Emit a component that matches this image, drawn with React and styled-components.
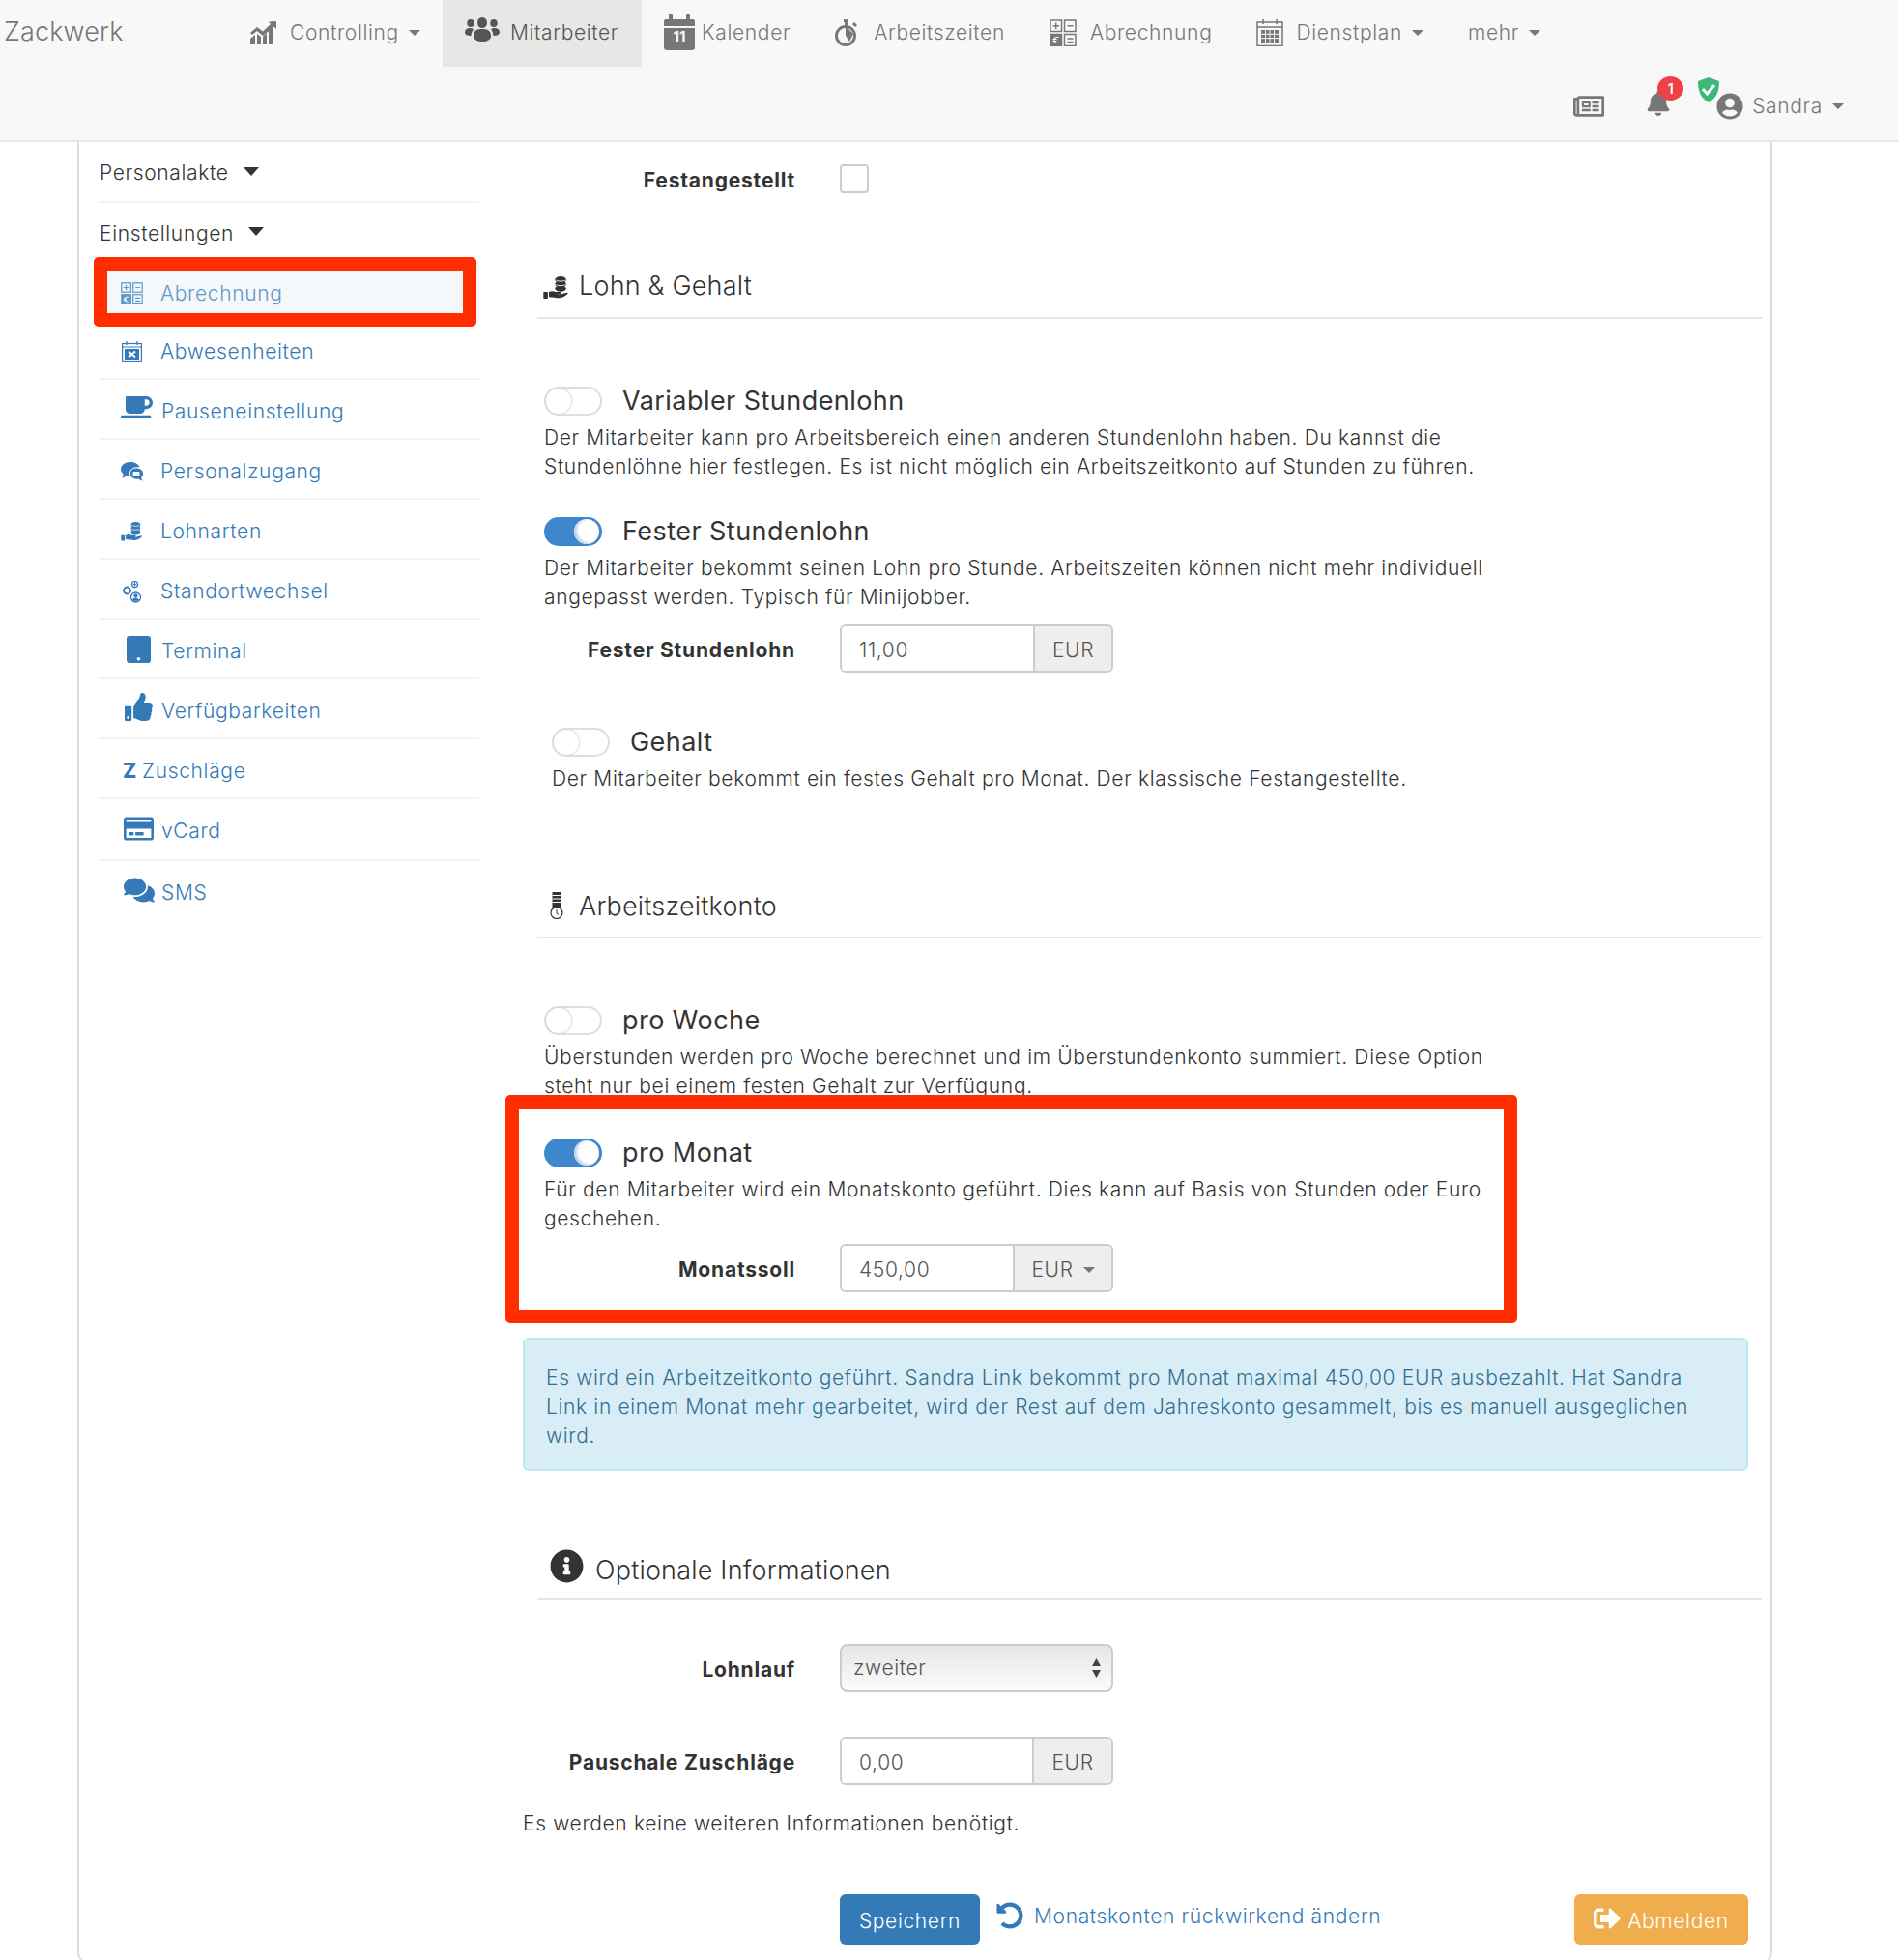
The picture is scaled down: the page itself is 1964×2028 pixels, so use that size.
import React from 'react';
import styled, { createGlobalStyle } from 'styled-components';
import {
  FaBell,
  FaCoffee,
  FaComments,
  FaInfoCircle,
  FaRegCreditCard,
  FaRegNewspaper,
  FaSignOutAlt,
  FaThumbsUp,
  FaUndoAlt,
  FaUserCircle,
} from 'react-icons/fa';

const GlobalStyle = createGlobalStyle`
  html, body {
    margin: 0;
    height: 2028px;
    overflow: hidden;
    background: #fff;
    font-family: Inter, "Liberation Sans", sans-serif;
    font-size: 21px;
    line-height: 30px;
    letter-spacing: 0.65px;
    color: #333;
  }
  * { box-sizing: border-box; }
`;

const Navbar = styled.header`
  height: 147px;
  background: #f8f8f8;
  border-bottom: 2px solid #e7e7e7;
`;

const TopRow = styled.div`
  display: flex;
  height: 69px;
`;

const Brand = styled.div`
  width: 236px;
  padding-left: 4px;
  font-size: 27px;
  font-weight: 300;
  line-height: 66px;
  letter-spacing: 0.15px;
  color: #777;
`;

const NavItem = styled.div`
  display: flex;
  align-items: center;
  height: 69px;
  padding: 0 ${(p) => (p.$active ? 24 : 23)}px 2px 23px;
  font-weight: 300;
  color: ${(p) => (p.$active ? '#555' : '#777')};
  background: ${(p) => (p.$active ? '#e7e7e7' : 'transparent')};
  white-space: nowrap;
`;

const NavIcon = styled.span`
  display: flex;
  flex: none;
  width: ${(p) => p.$width}px;
  margin-top: ${(p) => p.$lift || 0}px;
`;

const Caret = styled.i`
  display: inline-block;
  margin-left: 10px;
  border-top: 6px solid #777;
  border-left: 6px solid transparent;
  border-right: 6px solid transparent;
`;

const BottomRow = styled.div`
  display: flex;
  justify-content: flex-end;
  align-items: flex-start;
  height: 76px;
  padding-right: 56px;
`;

const NewsIcon = styled.span`
  display: flex;
  margin-top: 25px;
  margin-right: 43px;
  color: #777;
`;

const Bell = styled.span`
  position: relative;
  display: flex;
  margin-top: 25px;
  margin-right: 47px;
  color: #777;
`;

const Badge = styled.span`
  position: absolute;
  top: -15px;
  left: 12px;
  width: 27px;
  height: 25px;
  border-radius: 50%;
  background: #ee4045;
  color: #fff;
  font-size: 15px;
  font-weight: 600;
  line-height: 25px;
  letter-spacing: 0;
  text-align: center;
`;

const User = styled.div`
  position: relative;
  display: flex;
  align-items: center;
  margin-top: 23px;
  color: #777;
  font-weight: 300;
  line-height: 36px;
`;

const Shield = styled.svg`
  position: absolute;
  top: -12px;
  left: -20px;
`;

const UserName = styled.span`
  margin-left: 9px;
`;

const Panel = styled.div`
  display: flex;
  width: 1754px;
  height: 1884px;
  margin-left: 80px;
  border: 2px solid #ddd;
  border-top: 0;
  border-radius: 0 0 10px 10px;
`;

const Sidebar = styled.aside`
  flex: none;
  width: 414px;
  margin-right: 45px;
  padding-left: 21px;
`;

const SideHead = styled.div`
  display: flex;
  align-items: center;
  height: ${(p) => p.$height}px;
  padding-top: ${(p) => p.$top}px;
  font-weight: 300;
  color: #333;
  border-bottom: ${(p) => (p.$plain ? '0' : '2px solid #f3f3f3')};
`;

const SideCaret = styled.i`
  margin-left: 15px;
  margin-top: -4px;
  border-top: 9px solid #333;
  border-left: 8.5px solid transparent;
  border-right: 8.5px solid transparent;
`;

const rowTop = (p) => {
  if (p.$active) return 9;
  return p.$tall || p.$last ? 4 : 6;
};

const SideRow = styled.a`
  position: relative;
  display: flex;
  align-items: center;
  height: ${(p) => (p.$tall ? 64 : 62)}px;
  padding: ${rowTop}px 0 0 22px;
  font-weight: 300;
  color: ${(p) => (p.$active ? '#5f97c9' : '#337ab7')};
  background: ${(p) => (p.$active ? '#f5f8fb' : 'transparent')};
  border-bottom: ${(p) => (p.$last ? '0' : '2px solid #f3f3f3')};
`;

const SideIcon = styled.span`
  display: flex;
  flex: none;
  width: ${(p) => p.$width || 42}px;
  padding-left: ${(p) => p.$left || 0}px;
  margin-top: ${(p) => p.$lift || 0}px;
`;

const ZMark = styled.b`
  font-weight: 800;
`;

const RedFrame = styled.div`
  position: absolute;
  top: ${(p) => p.$top}px;
  left: ${(p) => p.$left}px;
  width: ${(p) => p.$width}px;
  height: ${(p) => p.$height}px;
  border: 14px solid #ff2d00;
  border-radius: 5px;
  pointer-events: none;
`;

const Main = styled.main`
  flex: none;
  width: 1282px;
`;

const FormRow = styled.div`
  display: flex;
  align-items: center;
  margin-top: ${(p) => p.$top}px;
`;

const Label = styled.label`
  width: 282px;
  margin-right: 46px;
  padding-top: 3px;
  text-align: right;
  font-weight: 700;
  line-height: 27px;
  letter-spacing: 0.8px;
`;

const Checkbox = styled.span`
  width: 30px;
  height: 30px;
  border: 2px solid #ccc;
  border-radius: 4px;
  background: #fff;
`;

const SectionHead = styled.h3`
  display: flex;
  align-items: flex-start;
  height: 54px;
  margin: ${(p) => p.$top}px 0 0 15px;
  padding: ${(p) => p.$textTop || 0}px 0 0 ${(p) => p.$pad}px;
  border-bottom: 2px solid #e5e5e5;
  font-size: 27px;
  font-weight: 300;
  line-height: 40px;
  letter-spacing: 0.2px;
`;

const HeadIcon = styled.span`
  display: flex;
  flex: none;
  width: ${(p) => p.$width}px;
  margin-top: ${(p) => p.$lift}px;
  color: #333;
`;

const OptionBlock = styled.section`
  position: relative;
  margin-top: ${(p) => p.$top}px;
  margin-left: ${(p) => (p.$inset ? 30 : 22)}px;
`;

const OptionTitle = styled.div`
  display: flex;
  align-items: center;
  height: 30px;
  margin-bottom: 8px;
  font-size: 27px;
  font-weight: 400;
  letter-spacing: 0.45px;
`;

const Toggle = styled.span`
  position: relative;
  flex: none;
  width: 60px;
  height: 30px;
  margin-right: 21px;
  border-radius: 15px;
  border: 2px solid ${(p) => (p.$on ? '#3f87cc' : '#dedede')};
  background: ${(p) => (p.$on ? '#3f87cc' : '#fff')};
  &::after {
    content: '';
    position: absolute;
    top: 0;
    left: ${(p) => (p.$on ? '29px' : '0')};
    width: 26px;
    height: 26px;
    border-radius: 50%;
    background: #fff;
    box-shadow: ${(p) => (p.$on ? 'inset 3px -1px 3px #bcd2e8' : '0 0 2px 1px #d8d8d8')};
  }
`;

const Description = styled.p`
  margin: 0;
  font-weight: 300;
  white-space: nowrap;
`;

const InputGroup = styled.div`
  display: flex;
  width: 283px;
  height: 50px;
  border: 2px solid #ccc;
  border-radius: 6px;
  overflow: hidden;
`;

const Input = styled.input`
  flex: 1;
  min-width: 0;
  padding: 4px 18px 0;
  border: 0;
  outline: 0;
  font: inherit;
  font-weight: 300;
  letter-spacing: inherit;
  color: #555;
`;

const Addon = styled.span`
  display: flex;
  align-items: center;
  justify-content: center;
  flex: none;
  width: ${(p) => p.$width}px;
  padding-top: 3px;
  border-left: 2px solid #ccc;
  background: #eee;
  font-weight: 300;
  color: #555;
`;

const Alert = styled.div`
  width: 1268px;
  margin-top: 47px;
  padding: 25px 22px 19px;
  border: 2px solid #bce8f1;
  border-radius: 6px;
  background: #d9edf7;
  color: #31708f;
  font-weight: 300;
  white-space: nowrap;
`;

const SelectWrap = styled.div`
  position: relative;
  width: 283px;
  height: 50px;
`;

const Select = styled.select`
  width: 100%;
  height: 100%;
  padding: 0 12px;
  border: 2px solid #ccc;
  border-radius: 8px;
  outline: 0;
  appearance: none;
  background: linear-gradient(#e6e6e6, #fbfbfb);
  font: inherit;
  font-weight: 300;
  letter-spacing: inherit;
  color: #555;
`;

const SelectArrows = styled.svg`
  position: absolute;
  top: 15px;
  right: 12px;
`;

const Hint = styled.p`
  margin: 25px 0 0;
  font-weight: 300;
`;

const Actions = styled.div`
  display: flex;
  align-items: flex-start;
  margin: 58px 0 0 328px;
  width: 940px;
`;

const Button = styled.button`
  display: flex;
  align-items: center;
  justify-content: center;
  height: 52px;
  width: ${(p) => p.$width}px;
  padding: 4px 0 0;
  border: 0;
  border-radius: 6px;
  background: ${(p) => p.$bg};
  color: #fff;
  font: inherit;
  font-weight: 300;
  letter-spacing: inherit;
`;

const RetroLink = styled.a`
  display: flex;
  align-items: flex-start;
  margin-left: 17px;
  margin-right: auto;
  padding-top: 8px;
  color: #337ab7;
  font-weight: 300;
`;

const RetroIcon = styled.span`
  display: flex;
  width: 39px;
`;

const ButtonIcon = styled.span`
  display: flex;
  margin-right: 7px;
  margin-top: -6px;
`;

const ChartIcon = () => (
  <svg width="27" height="24" viewBox="0 0 27 24" fill="currentColor">
    <path d="M0 24v-6l5-4v10zM7 24V13l4 3v8zM13 24v-8l4-4v12zM19 24V10l4-4v18z" />
    <path d="M0 12l7-6 6 4.500L21 3l-2-2.500L27 0v8l-2.200-2.300L13 15 7 10l-5 4z" />
  </svg>
);

const PeopleIcon = () => (
  <svg width="36" height="25" viewBox="0 0 36 25" fill="currentColor">
    <ellipse cx="18" cy="5.500" rx="5" ry="5.500" />
    <ellipse cx="6" cy="6" rx="3.700" ry="4" />
    <ellipse cx="30" cy="6" rx="3.700" ry="4" />
    <path d="M9 19.500c0-6 3.500-7.500 9-7.500s9 1.500 9 7.500c0 3.500-4 5.500-9 5.500s-9-2-9-5.500z" />
    <path d="M0 15.500c0-3 2-4.500 5-4.500 1.500 0 3 .5 4 1.200-1.500 1.800-2.300 3.800-2.500 6.800C3 19 0 18 0 15.500z" />
    <path d="M36 15.500c0-3-2-4.500-5-4.500-1.500 0-3 .5-4 1.200 1.500 1.800 2.300 3.800 2.500 6.800 3.500 0 6.500-1 6.500-3.500z" />
  </svg>
);

const CalendarDayIcon = () => (
  <svg width="32" height="37" viewBox="0 0 32 37" fill="currentColor">
    <rect x="5" y="0" width="4" height="8" rx="1" />
    <rect x="23" y="0" width="4" height="8" rx="1" />
    <path d="M2 5h28a2 2 0 0 1 2 2v5H0V7a2 2 0 0 1 2-2z" />
    <path d="M0 14h32v20a3 3 0 0 1-3 3H3a3 3 0 0 1-3-3z" />
    <text x="16" y="28" fontSize="15" fontWeight="700" textAnchor="middle" fill="#f8f8f8" fontFamily="Inter, sans-serif" letterSpacing="0">11</text>
  </svg>
);

const StopwatchIcon = () => (
  <svg width="23" height="28" viewBox="0 0 23 28" fill="none" stroke="currentColor">
    <circle cx="11" cy="17" r="9.500" strokeWidth="3" />
    <path d="M9 1.500h5M11.500 1.500v5M19 4l3 3" strokeWidth="3" />
    <path d="M11 7v10l4 6 4-8z" fill="currentColor" stroke="none" />
  </svg>
);

const CalcIcon = ({ size = 28 }) => (
  <svg width={size} height={size} viewBox="0 0 28 28" fill="none" stroke="currentColor" strokeWidth="1.500">
    <rect x="1" y="1" width="11.500" height="11.500" />
    <rect x="15.500" y="1" width="11.500" height="11.500" />
    <rect x="1" y="15.500" width="11.500" height="12" fill="currentColor" />
    <rect x="15.500" y="15.500" width="11.500" height="12" />
    <path d="M6.700 3.500v6.500M3.500 6.700h6.500M18.500 6.700h6M18.500 20h6M18.500 23.500h6" />
    <path d="M9.500 18.500h-2c-2 0-2.500 1.500-2.500 3s.5 3 2.500 3h2M3.500 20.500h4M3.500 22.500h4" stroke="#fff" strokeWidth="1.200" />
  </svg>
);

const PlanIcon = () => (
  <svg width="28" height="28" viewBox="0 0 28 28" fill="none" stroke="currentColor" strokeWidth="1.500">
    <rect x="1" y="3" width="26" height="24.500" />
    <path d="M1 8h26M7 0v5M21 0v5" />
    <path d="M5 11h18v13H5z" fill="currentColor" stroke="none" />
    <path d="M5 15.300h18M5 19.600h18M9.500 11v13M14 11v13M18.500 11v13" stroke="#f8f8f8" strokeWidth="1" />
  </svg>
);

const AbsenceIcon = () => (
  <svg width="21" height="22" viewBox="0 0 21 22" fill="none" stroke="currentColor" strokeWidth="1.200">
    <rect x="0.600" y="2.500" width="19.800" height="19" />
    <path d="M0.600 6h19.800M5 0v4M16 0v4" />
    <rect x="3" y="8" width="15" height="11" fill="currentColor" stroke="none" />
    <path d="M7 10.500l7 6M14 10.500l-7 6" stroke="#fff" strokeWidth="2" />
  </svg>
);

const TalkIcon = () => (
  <svg width="23" height="20" viewBox="0 0 23 20" fill="currentColor">
    <path d="M10 0c5 0 9 2.500 9.500 5.500-4-1-10 .5-10.500 6 0 1.500.3 2.500 1 3.500-2 0-3.500 0-5-.5-1 1-2.500 2-4 2 1-1 1.500-2 1.500-4C1 11 0 9.500 0 7.500 0 3 4.500 0 10 0z" />
    <path d="M16 6.500c4 0 7 2.200 7 5.500 0 1.500-.5 3-1.800 4 0 1.200.5 2.500 1.300 3.500-1.500 0-3-1-3.800-2-3.700.8-8.700-.7-8.700-5.500 0-3.300 2-5.500 6-5.500z" />
    <rect x="12.500" y="10" width="7" height="5" rx="1" fill="#fff" />
  </svg>
);

const CoinHandIcon = ({ size = 23, bg = '#fff' }) => (
  <svg width={size} height={size * 0.85} viewBox="0 0 23 20" fill="currentColor">
    <rect x="0" y="14" width="4" height="6" rx="0.500" />
    <path d="M5 14c2-1 4-1 6 0h4c1 .3 1 1.500 0 2h-3c2 .3 4 .3 5.500-.5l4-1c.7 0 1 .8.300 1.300-2 2-4.800 3.700-8 3.700-2.500 0-5-1-8.800-1z" />
    <ellipse cx="15.500" cy="3" rx="5" ry="3" />
    <ellipse cx="15.500" cy="7" rx="5" ry="3" />
    <ellipse cx="15.500" cy="11" rx="5" ry="2.700" />
    <path d="M11.500 3.500c2 1.300 6 1.300 8 0M11.500 7.500c2 1.300 6 1.300 8 0" stroke={bg} strokeWidth="0.800" fill="none" />
  </svg>
);

const SwapIcon = () => (
  <svg width="20" height="23" viewBox="0 0 20 23" fill="none" stroke="currentColor" strokeWidth="1.300">
    <circle cx="4.500" cy="10" r="3.500" strokeWidth="1.800" />
    <circle cx="12.500" cy="3.500" r="3" />
    <circle cx="13.500" cy="17" r="5" />
    <circle cx="13.500" cy="15.500" r="1.500" fill="currentColor" />
    <path d="M10.500 20c.5-2 5-2 6 0z" fill="currentColor" />
    <path d="M12.500 1.800v3.400M10.800 3.500h3.400" strokeWidth="1" />
  </svg>
);

const TabletIcon = () => (
  <svg width="25" height="28" viewBox="0 0 25 28" fill="currentColor">
    <path fillRule="evenodd" d="M3 0h19a3 3 0 0 1 3 3v22a3 3 0 0 1-3 3H3a3 3 0 0 1-3-3V3a3 3 0 0 1 3-3zM12.500 22a1.800 1.800 0 1 0 0 3.600 1.800 1.800 0 0 0 0-3.600z" />
  </svg>
);

const TimeBarIcon = () => (
  <svg width="14" height="28" viewBox="0 0 14 28" fill="none" stroke="currentColor">
    <rect x="2.500" y="0" width="9" height="16" fill="currentColor" stroke="none" />
    <path d="M2.500 3.500h9M2.500 7h9M2.500 10.500h9" stroke="#fff" strokeWidth="1" />
    <circle cx="7" cy="21.500" r="6" strokeWidth="1.200" />
    <path d="M7 18v4l2 1.500" strokeWidth="1" />
  </svg>
);

const sideRows = [
  { label: 'Abrechnung', icon: <CalcIcon size={23} />, width: 41, active: true },
  { label: 'Abwesenheiten', icon: <AbsenceIcon />, width: 41, left: 1 },
  { label: 'Pauseneinstellung', icon: <FaCoffee size={33} />, lift: -9 },
  { label: 'Personalzugang', icon: <TalkIcon />, width: 41 },
  { label: 'Lohnarten', icon: <CoinHandIcon />, width: 41 },
  { label: 'Standortwechsel', icon: <SwapIcon />, width: 41, left: 2 },
  { label: 'Terminal', icon: <TabletIcon />, left: 6, lift: -5 },
  { label: 'Verfügbarkeiten', icon: <FaThumbsUp size={29} />, left: 4, lift: -10 },
  { label: 'Zuschläge', icon: <ZMark>Z</ZMark>, left: 2, width: 22 },
  { label: 'vCard', icon: <FaRegCreditCard size={31} />, left: 3, lift: -5, tall: true },
  { label: 'SMS', icon: <FaComments size={32} />, left: 3, lift: -7, last: true },
];

const navItems = [
  { label: 'Controlling', icon: <ChartIcon />, width: 41, caret: true },
  { label: 'Mitarbeiter', icon: <PeopleIcon />, width: 47, lift: -6, active: true },
  { label: 'Kalender', icon: <CalendarDayIcon />, width: 39 },
  { label: 'Arbeitszeiten', icon: <StopwatchIcon />, width: 40 },
  { label: 'Abrechnung', icon: <CalcIcon />, width: 42 },
  { label: 'Dienstplan', icon: <PlanIcon />, width: 41, caret: true },
  { label: 'mehr', caret: true },
];

const SideItem = ({ row }) => (
  <SideRow $active={row.active} $tall={row.tall} $last={row.last}>
    <SideIcon $width={row.width} $left={row.left} $lift={row.lift}>{row.icon}</SideIcon>
    {row.label}
    {row.active && <RedFrame $top={-3} $left={-6} $width={396} $height={72} />}
  </SideRow>
);

const Option = ({ title, on, inset, top, children }) => (
  <OptionBlock $top={top} $inset={inset}>
    <OptionTitle>
      <Toggle $on={on} />
      {title}
    </OptionTitle>
    <Description>{children}</Description>
  </OptionBlock>
);

const App = () => {
  return (
    <>
      <GlobalStyle />
      <Navbar>
        <TopRow>
          <Brand>Zackwerk</Brand>
          {navItems.map((item) => (
            <NavItem key={item.label} $active={item.active}>
              {item.icon && <NavIcon $width={item.width} $lift={item.lift}>{item.icon}</NavIcon>}
              {item.label}
              {item.caret && <Caret />}
            </NavItem>
          ))}
        </TopRow>
        <BottomRow>
          <NewsIcon><FaRegNewspaper size={32} /></NewsIcon>
          <Bell>
            <FaBell size={26} />
            <Badge>1</Badge>
          </Bell>
          <User>
            <Shield width="24" height="26" viewBox="0 0 24 26">
              <path d="M12 0l11 4c0 9-2 17-11 22C3 21 1 13 1 4z" fill="#3cb878" />
              <path d="M6 12l4.500 5L18 8" fill="none" stroke="#fff" strokeWidth="3" />
            </Shield>
            <FaUserCircle size={28} />
            <UserName>Sandra</UserName>
            <Caret />
          </User>
        </BottomRow>
      </Navbar>

      <Panel>
        <Sidebar>
          <SideHead $height={63} $top={3}>Personalakte<SideCaret /></SideHead>
          <SideHead $height={59} $top={4} $plain>Einstellungen<SideCaret /></SideHead>
          {sideRows.map((row) => (
            <SideItem key={row.label} row={row} />
          ))}
        </Sidebar>

        <Main>
          <FormRow $top={23}>
            <Label>Festangestellt</Label>
            <Checkbox />
          </FormRow>

          <SectionHead $top={76} $pad={6}>
            <HeadIcon $width={37} $lift={10}><CoinHandIcon size={27} /></HeadIcon>
            Lohn &amp; Gehalt
          </SectionHead>

          <Option title="Variabler Stundenlohn" top={70}>
            Der Mitarbeiter kann pro Arbeitsbereich einen anderen Stundenlohn haben. Du kannst die<br />
            Stundenlöhne hier festlegen. Es ist nicht möglich ein Arbeitszeitkonto auf Stunden zu führen.
          </Option>

          <Option title="Fester Stundenlohn" on top={37}>
            Der Mitarbeiter bekommt seinen Lohn pro Stunde. Arbeitszeiten können nicht mehr individuell<br />
            angepasst werden. Typisch für Minijobber.
          </Option>
          <FormRow $top={13}>
            <Label>Fester Stundenlohn</Label>
            <InputGroup>
              <Input defaultValue="11,00" />
              <Addon $width={81}>EUR</Addon>
            </InputGroup>
          </FormRow>

          <Option title="Gehalt" inset top={57}>
            Der Mitarbeiter bekommt ein festes Gehalt pro Monat. Der klassische Festangestellte.
          </Option>

          <SectionHead $top={96} $pad={13} $textTop={1}>
            <HeadIcon $width={30} $lift={5}><TimeBarIcon /></HeadIcon>
            Arbeitszeitkonto
          </SectionHead>

          <Option title="pro Woche" top={70}>
            Überstunden werden pro Woche berechnet und im Überstundenkonto summiert. Diese Option<br />
            steht nur bei einem festen Gehalt zur Verfügung.
          </Option>

          <OptionBlock $top={39}>
            <OptionTitle>
              <Toggle $on />
              pro Monat
            </OptionTitle>
            <Description>
              Für den Mitarbeiter wird ein Monatskonto geführt. Dies kann auf Basis von Stunden oder Euro<br />
              geschehen.
            </Description>
            <RedFrame $top={-45} $left={-40} $width={1047} $height={236} />
          </OptionBlock>
          <FormRow $top={11}>
            <Label>Monatssoll</Label>
            <InputGroup>
              <Input defaultValue="450,00" />
              <Addon $width={102}>EUR<Caret /></Addon>
            </InputGroup>
          </FormRow>

          <Alert>
            Es wird ein Arbeitzeitkonto geführt. Sandra Link bekommt pro Monat maximal 450,00 EUR ausbezahlt. Hat Sandra<br />
            Link in einem Monat mehr gearbeitet, wird der Rest auf dem Jahreskonto gesammelt, bis es manuell ausgeglichen<br />
            wird.
          </Alert>

          <SectionHead $top={79} $pad={13} $textTop={4}>
            <HeadIcon $width={47} $lift={-2}><FaInfoCircle size={35} /></HeadIcon>
            Optionale Informationen
          </SectionHead>

          <FormRow $top={46}>
            <Label>Lohnlauf</Label>
            <SelectWrap>
              <Select defaultValue="zweiter">
                <option>zweiter</option>
              </Select>
              <SelectArrows width="11" height="20" viewBox="0 0 11 20" fill="#444">
                <path d="M5.500 0L10 8H1zM5.500 20L1 12h9z" />
              </SelectArrows>
            </SelectWrap>
          </FormRow>

          <FormRow $top={46}>
            <Label>Pauschale Zuschläge</Label>
            <InputGroup>
              <Input defaultValue="0,00" />
              <Addon $width={82}>EUR</Addon>
            </InputGroup>
          </FormRow>

          <Hint>Es werden keine weiteren Informationen benötigt.</Hint>

          <Actions>
            <Button $width={145} $bg="#337ab7">Speichern</Button>
            <RetroLink>
              <RetroIcon><FaUndoAlt size={28} /></RetroIcon>
              Monatskonten rückwirkend ändern
            </RetroLink>
            <Button $width={180} $bg="#f0ad4e">
              <ButtonIcon><FaSignOutAlt size={28} /></ButtonIcon>
              Abmelden
            </Button>
          </Actions>
        </Main>
      </Panel>
    </>
  );
};

export default App;
